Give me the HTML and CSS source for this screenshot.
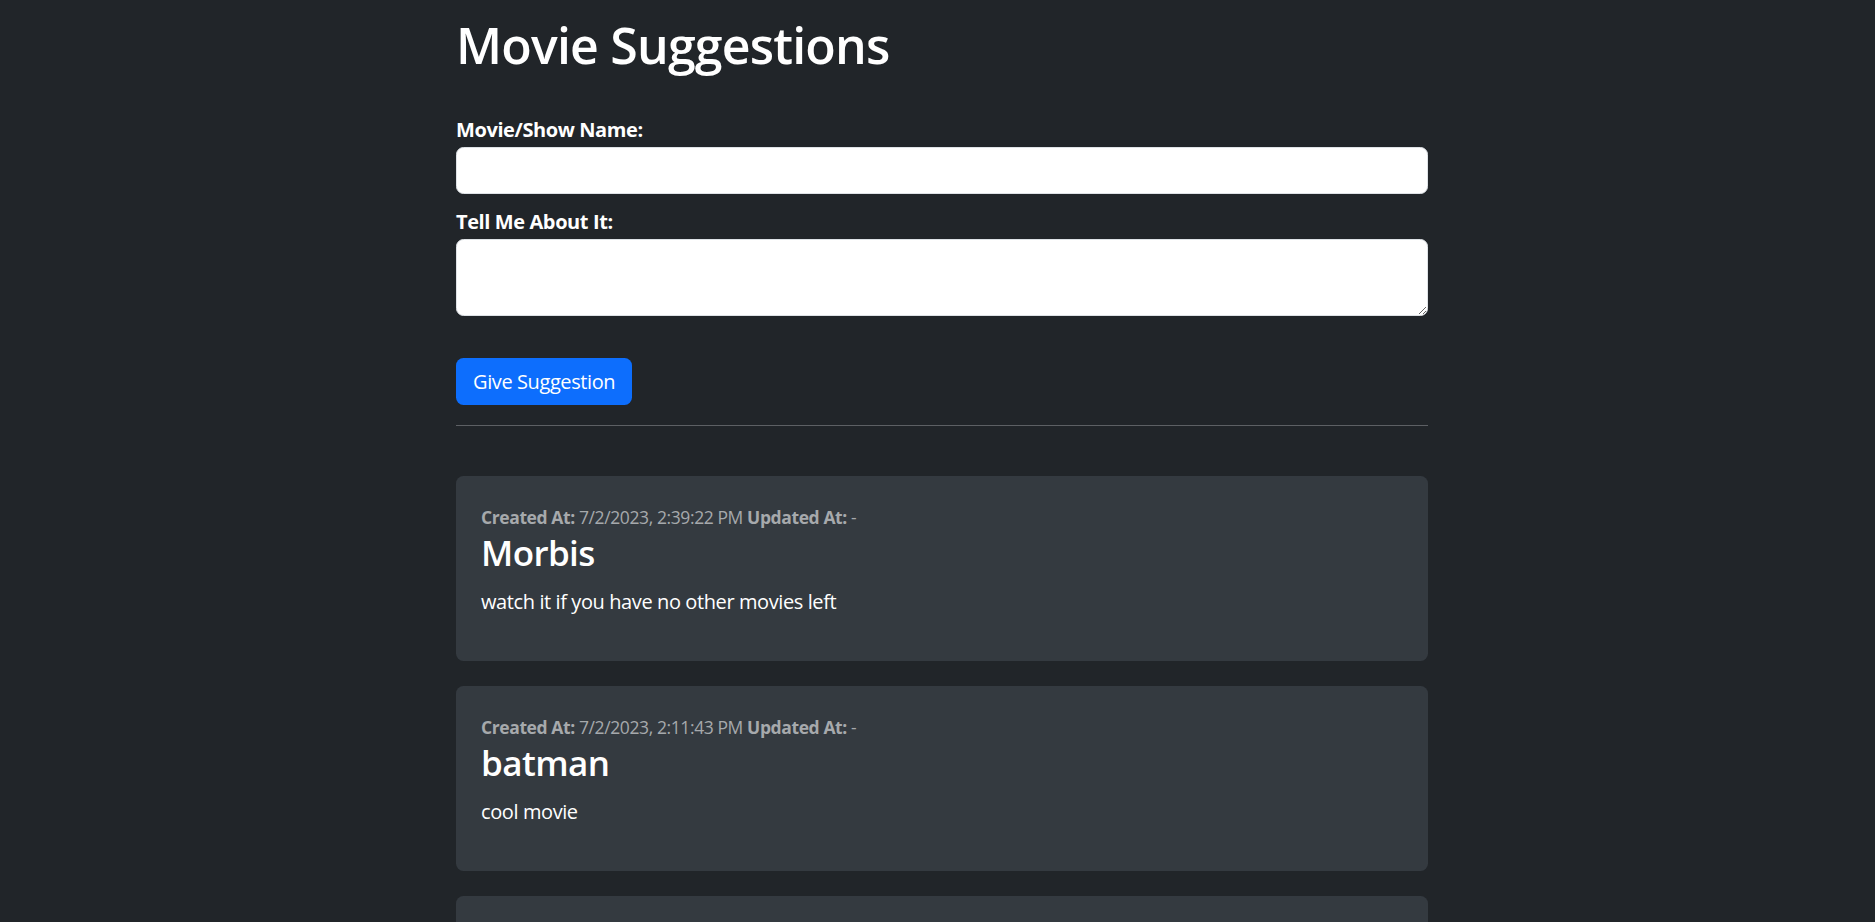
FILE: index.html
```html
<!DOCTYPE html>
<html lang="en">
<head>
<meta charset="utf-8">
<title>Movie Suggestions</title>
<link rel="stylesheet" href="styles.css">
</head>
<body>
<main class="container">
  <h1 class="title">Movie Suggestions</h1>
  <form class="form">
    <label class="label" for="name">Movie/Show Name:</label>
    <input class="field" id="name" type="text">
    <label class="label label-2" for="about">Tell Me About It:</label>
    <textarea class="field area" id="about"></textarea>
    <button class="btn" type="button">Give Suggestion</button>
  </form>
  <hr class="rule">
  <section class="list">
    <article class="card">
      <div class="meta"><small><b>Created At:</b> 7/2/2023, 2:39:22 PM <b>Updated At:</b> -</small></div>
      <h3 class="card-title">Morbis</h3>
      <p class="card-text">watch it if you have no other movies left</p>
    </article>
    <article class="card">
      <div class="meta"><small><b>Created At:</b> 7/2/2023, 2:11:43 PM <b>Updated At:</b> -</small></div>
      <h3 class="card-title">batman</h3>
      <p class="card-text">cool movie</p>
    </article>
    <article class="card">
      <div class="meta"><small><b>Created At:</b> 7/2/2023, 1:58:10 PM <b>Updated At:</b> -</small></div>
      <h3 class="card-title">Inception</h3>
      <p class="card-text">great movie</p>
    </article>
  </section>
</main>
</body>
</html>
```
FILE: styles.css
```css
* { box-sizing: border-box; }
html, body { margin: 0; padding: 0; }
body {
  background: #212529;
  color: #ffffff;
  font-family: "Open Sans", "Noto Sans", "Liberation Sans", sans-serif;
  font-size: 20px;
  line-height: 1.5;
  padding-left: 9px;
}
.container {
  width: 972px;
  margin: 0 auto;
  padding-top: 15px;
}
.title {
  margin: 0 0 40px;
  font-size: 50px;
  font-weight: 600;
  line-height: 1.2;
  letter-spacing: -0.8px;
}
.form {
  display: flex;
  flex-direction: column;
  align-items: flex-start;
}
.label {
  font-weight: 700;
  font-size: 20px;
  line-height: 30px;
  margin-bottom: 2px;
  letter-spacing: -0.4px;
}
.label-2 { margin-top: 13px; }
.field {
  width: 100%;
  height: 47px;
  border: 1px solid #dee2e6;
  border-radius: 7.5px;
  background: #fff;
  font: inherit;
  padding: 7px 15px;
}
.area {
  height: 77px;
  resize: vertical;
}
.btn {
  margin-top: 42px;
  height: 47px;
  padding: 0 17px;
  background: #0d6efd;
  color: #fff;
  border: 0;
  border-radius: 7.5px;
  font-family: inherit;
  font-size: 20px;
  letter-spacing: -0.4px;
}
.rule {
  margin: 20px 0 50px;
  border: 0;
  border-top: 1px solid #5d6064;
}
.list {
  display: flex;
  flex-direction: column;
  gap: 25px;
}
.card {
  background: #343a40;
  border-radius: 7.5px;
  padding: 26px 25px 25px;
}
.meta {
  line-height: 30px;
  color: #a6a9ac;
}
.meta small {
  font-size: 17.5px;
  letter-spacing: -0.4px;
}
.meta b { font-weight: 700; }
.card-title {
  margin: 0 0 13px;
  font-size: 35px;
  font-weight: 600;
  line-height: 1.2;
  letter-spacing: -0.6px;
}
.card-text {
  margin: 0 0 19px;
  letter-spacing: -0.4px;
}
```
